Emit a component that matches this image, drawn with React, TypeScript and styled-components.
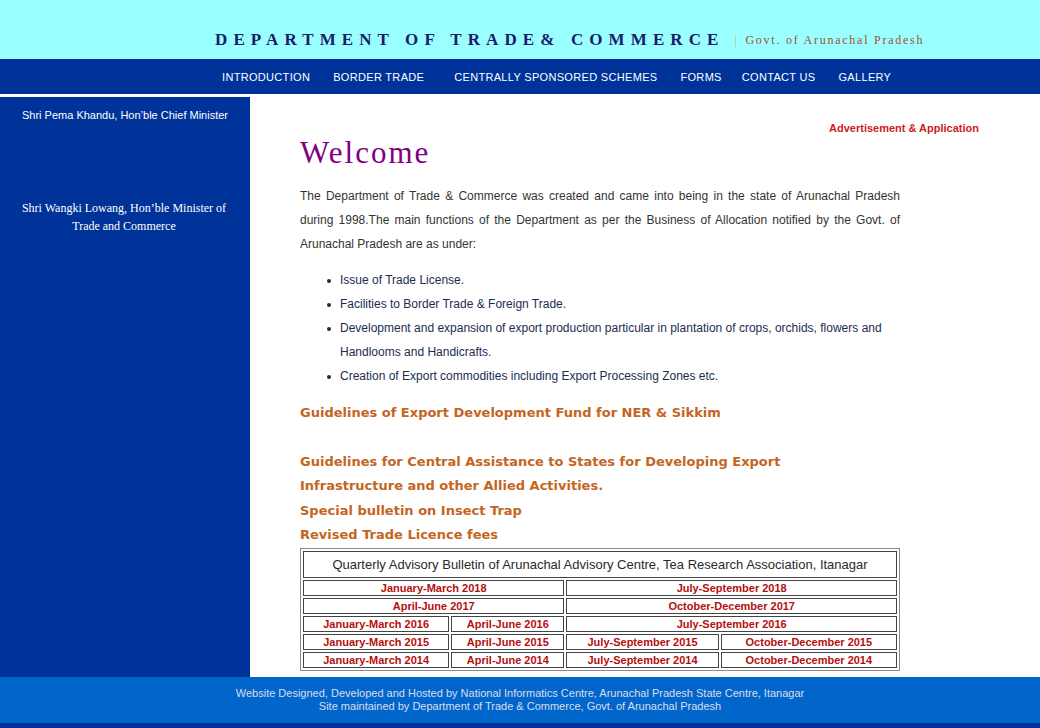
import React from "react";
import styled, { createGlobalStyle } from "styled-components";

const Global = createGlobalStyle`
  html, body { margin: 0; padding: 0; background: #ffffff; }
  body { font-family: "Liberation Sans", Arial, sans-serif; }
`;

const Page = styled.div`
  width: 1040px;
  display: flex;
  flex-direction: column;
`;

const Header = styled.header`
  height: 59px;
  background: #99ffff;
  display: flex;
  align-items: flex-end;
  padding-left: 215px;
  box-sizing: border-box;
  padding-bottom: 9px;
`;

const Title = styled.h1`
  margin: 0;
  font-family: "Liberation Serif", "Times New Roman", serif;
  font-weight: bold;
  font-size: 17px;
  letter-spacing: 6.1px;
  color: #1b1b6b;
  line-height: 20px;
`;

const Sub = styled.span`
  font-family: "Liberation Serif", "Times New Roman", serif;
  font-size: 12px;
  letter-spacing: 1.75px;
  color: #a0522d;
  line-height: 20px;
  margin-left: 10px;
`;

const Pipe = styled.span`
  color: #d9b48a;
  margin-right: 2px;
`;

const Nav = styled.nav`
  height: 35px;
  background: #003399;
  display: flex;
  align-items: center;
  padding-left: 222px;
  box-sizing: border-box;
`;

const NavItem = styled.a<{ $after: number }>`
  color: #ffffff;
  font-family: "Liberation Sans", Arial, sans-serif;
  font-size: 11px;
  letter-spacing: 0.32px;
  text-decoration: none;
  margin-right: ${(p) => p.$after}px;
  padding-top: 1px;
`;

const Body = styled.div`
  margin-top: 3px;
  display: grid;
  grid-template-columns: 250px 1fr;
`;

const Sidebar = styled.aside`
  background: #003399;
  color: #ffffff;
  text-align: center;
  padding-top: 11px;
`;

const SideSans = styled.div`
  font-family: "Liberation Sans", Arial, sans-serif;
  font-size: 11px;
  line-height: 14px;
`;

const SideSerif = styled.div`
  font-family: "Liberation Serif", "Times New Roman", serif;
  font-size: 12px;
  line-height: 18px;
  margin-top: 77px;
  padding: 0 12px 0 10px;
`;

const Main = styled.main`
  padding: 24px 0 6px 50px;
`;

const AdLine = styled.div`
  text-align: right;
  padding-right: 61px;
  font-family: "Liberation Sans", Arial, sans-serif;
  font-weight: bold;
  font-size: 11px;
  line-height: 14px;
  color: #d11a1a;
`;

const Content = styled.div`
  width: 600px;
`;

const Welcome = styled.h2`
  margin: 1px 0 0;
  font-family: "Liberation Serif", "Times New Roman", serif;
  font-weight: normal;
  font-size: 31px;
  letter-spacing: 2px;
  line-height: 34px;
  color: #800080;
`;

const Para = styled.p`
  margin: 14px 0 0;
  font-family: "Liberation Sans", Arial, sans-serif;
  font-size: 12px;
  line-height: 24px;
  color: #333333;
  text-align: justify;
`;

const List = styled.ul`
  margin: 12px 0 0;
  padding-left: 40px;
  list-style: none;
  font-family: "Liberation Sans", Arial, sans-serif;
  font-size: 12px;
  line-height: 24px;
  color: #1b2d4f;
`;

const Item = styled.li`
  position: relative;
  &::before {
    content: "";
    position: absolute;
    left: -13px;
    top: 11px;
    width: 4px;
    height: 4px;
    border-radius: 50%;
    background: #1b2d4f;
  }
`;

const Link = styled.div<{ $top: number }>`
  margin-top: ${(p) => p.$top}px;
  font-family: "DejaVu Sans", Verdana, sans-serif;
  font-weight: bold;
  font-size: 13px;
  line-height: 24.5px;
  color: #c4651e;
`;

const Table = styled.table`
  width: 600px;
  border: 1px solid #8a8a8a;
  border-spacing: 2px;
  border-collapse: separate;
  table-layout: fixed;
`;

const HeadCell = styled.td`
  border: 1px solid #444;
  height: 25px;
  padding: 0;
  text-align: center;
  font-family: "Liberation Sans", Arial, sans-serif;
  font-size: 13px;
  color: #2a2a2a;
`;

const Cell = styled.td`
  border: 1px solid #444;
  height: 14px;
  padding: 0;
  text-align: center;
  font-family: "Liberation Sans", Arial, sans-serif;
  font-weight: bold;
  font-size: 11px;
  line-height: 14px;
  color: #b50e0e;
  white-space: nowrap;
`;

const Footer = styled.footer`
  height: 46px;
  background: #0066cc;
  box-sizing: border-box;
  padding-top: 10px;
  text-align: center;
  font-family: "Liberation Sans", Arial, sans-serif;
  font-size: 11px;
  line-height: 13px;
  color: #dcdcec;
`;

const BottomBar = styled.div`
  height: 6px;
  background: #003399;
`;

const navItems: [string, number][] = [
  ["INTRODUCTION", 23],
  ["BORDER TRADE", 30],
  ["CENTRALLY SPONSORED SCHEMES", 23],
  ["FORMS", 20],
  ["CONTACT US", 23],
  ["GALLERY", 0],
];

type C = { t: string; span?: number };
const rows: C[][] = [
  [{ t: "January-March 2018", span: 2 }, { t: "July-September 2018", span: 2 }],
  [{ t: "April-June 2017", span: 2 }, { t: "October-December 2017", span: 2 }],
  [{ t: "January-March 2016" }, { t: "April-June 2016" }, { t: "July-September 2016", span: 2 }],
  [{ t: "January-March 2015" }, { t: "April-June 2015" }, { t: "July-September 2015" }, { t: "October-December 2015" }],
  [{ t: "January-March 2014" }, { t: "April-June 2014" }, { t: "July-September 2014" }, { t: "October-December 2014" }],
];

export default function App() {
  return (
    <Page>
      <Global />
      <Header>
        <Title>DEPARTMENT OF TRADE&amp; COMMERCE</Title>
        <Sub>
          <Pipe>|</Pipe> Govt. of Arunachal Pradesh
        </Sub>
      </Header>
      <Nav>
        {navItems.map(([t, a]) => (
          <NavItem key={t} href="#" $after={a}>
            {t}
          </NavItem>
        ))}
      </Nav>
      <Body>
        <Sidebar>
          <SideSans>Shri Pema Khandu, Hon’ble Chief Minister</SideSans>
          <SideSerif>
            Shri Wangki Lowang, Hon’ble Minister of
            <br />
            Trade and Commerce
          </SideSerif>
        </Sidebar>
        <Main>
          <AdLine>Advertisement &amp; Application</AdLine>
          <Content>
            <Welcome>Welcome</Welcome>
            <Para>
              The Department of Trade &amp; Commerce was created and came into being in the state of
              Arunachal Pradesh during 1998.The main functions of the Department as per the Business of
              Allocation notified by the Govt. of Arunachal Pradesh are as under:
            </Para>
            <List>
              <Item>Issue of Trade License.</Item>
              <Item>Facilities to Border Trade &amp; Foreign Trade.</Item>
              <Item>
                Development and expansion of export production particular in plantation of crops, orchids,
                flowers and Handlooms and Handicrafts.
              </Item>
              <Item>Creation of Export commodities including Export Processing Zones etc.</Item>
            </List>
            <Link $top={13}>Guidelines of Export Development Fund for NER &amp; Sikkim</Link>
            <Link $top={24}>
              Guidelines for Central Assistance to States for Developing Export
              <br />
              Infrastructure and other Allied Activities.
            </Link>
            <Link $top={0}>Special bulletin on Insect Trap</Link>
            <Link $top={0}>Revised Trade Licence fees</Link>
            <Table>
              <colgroup>
                <col style={{ width: 146 }} />
                <col style={{ width: 113 }} />
                <col style={{ width: 152 }} />
                <col style={{ width: 176 }} />
              </colgroup>
              <tbody>
                <tr>
                  <HeadCell colSpan={4}>
                    Quarterly Advisory Bulletin of Arunachal Advisory Centre, Tea Research Association, Itanagar
                  </HeadCell>
                </tr>
                {rows.map((r, i) => (
                  <tr key={i}>
                    {r.map((c) => (
                      <Cell key={c.t} colSpan={c.span}>
                        {c.t}
                      </Cell>
                    ))}
                  </tr>
                ))}
              </tbody>
            </Table>
          </Content>
        </Main>
      </Body>
      <Footer>
        Website Designed, Developed and Hosted by National Informatics Centre, Arunachal Pradesh State Centre,
        Itanagar
        <br />
        Site maintained by Department of Trade &amp; Commerce, Govt. of Arunachal Pradesh
      </Footer>
      <BottomBar />
    </Page>
  );
}
